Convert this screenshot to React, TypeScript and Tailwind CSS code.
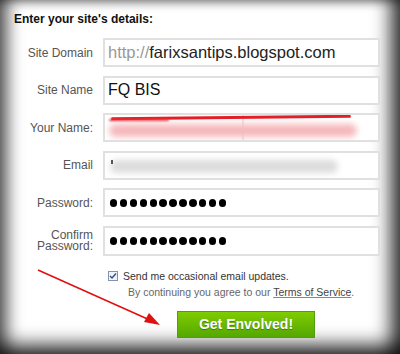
import React from "react";

const Dots = () => (
  <div className="flex items-center gap-[2.5px] pl-[5px]">
    {Array.from({ length: 12 }).map((_, i) => (
      <span key={i} className="block h-[7.4px] w-[7.4px] rounded-full bg-black" />
    ))}
  </div>
);

export default function App() {
  const label = "text-right text-[12px] leading-[12px] text-[#555]";
  const box = "relative h-[29px] border-2 border-[#e0e0e0] bg-white flex items-center overflow-hidden";
  return (
    <div
      className="relative h-[354px] w-[400px] overflow-hidden bg-white shadow-[inset_16px_0_16px_-8px_rgba(0,0,0,0.6),inset_-18px_0_18px_-8px_rgba(0,0,0,0.75),inset_0_-18px_18px_-8px_rgba(0,0,0,0.75),inset_0_10px_10px_-8px_rgba(0,0,0,0.35)]"
      style={{ fontFamily: '"Liberation Sans", Arial, sans-serif' }}
    >
      <div className="pl-[14px] pt-[13px] text-[12px] font-bold leading-[12px] text-[#111]">
        Enter your site's details:
      </div>

      <div className="mt-[13px] grid grid-cols-[93px_277px] items-center gap-x-[10px] gap-y-[8.6px]">
        <div className={label}>Site Domain</div>
        <div className={box}>
          <span className="pl-[3px] text-[16.5px] text-[#222]">
            <span className="text-[#999]">http://</span>farixsantips.blogspot.com
          </span>
        </div>

        <div className={label}>Site Name</div>
        <div className={box}>
          <span className="pl-[3px] text-[16px] text-[#111]">FQ BIS</span>
        </div>

        <div className={label}>Your Name:</div>
        <div className={box}>
          <div className="absolute left-[137px] top-0 h-full w-[2px] bg-[#e8e8e8]" />
          <div className="absolute left-[4px] top-[9px] h-[13px] w-[248px] rounded-full bg-[#f6b8bc] blur-[3px]" />
          <div className="absolute left-[6px] top-[1px] h-[3px] w-[240px] -rotate-[0.6deg] rounded-full bg-[#e41e26] blur-[0.6px]" />
          <div className="absolute left-[4px] top-[4px] h-[2px] w-[60px] rounded-full bg-[#e8323a] blur-[1px]" />
        </div>

        <div className={label}>Email</div>
        <div className={box}>
          <div className="absolute left-[5px] top-[7px] h-[13px] w-[228px] rounded-full bg-[#dcdcdc] blur-[3px]" />
          <div className="absolute left-[6px] top-[7px] h-[4px] w-[2px] bg-[#555]" />
        </div>

        <div className={label}>Password:</div>
        <div className={box}>
          <Dots />
        </div>

        <div className="text-right text-[12px] leading-[11px] text-[#555]">
          Confirm
          <br />
          Password:
        </div>
        <div className={`${box} h-[30px] border-[#67aee4]`}>
          <Dots />
        </div>
      </div>

      <div className="ml-[108px] mt-[14px] flex items-center gap-[5px]">
        <span className="flex h-[10px] w-[10px] items-center justify-center border border-[#8494a8] bg-[#f0f4fa]">
          <svg width="8" height="8" viewBox="0 0 8 8">
            <path d="M1 4 L3 6 L7 1.5" stroke="#2d4f86" strokeWidth="1.4" fill="none" />
          </svg>
        </span>
        <span className="text-[10.5px] leading-[12px] text-[#333]">Send me occasional email updates.</span>
      </div>
      <div className="ml-[128px] mt-[4px] text-[10.5px] leading-[12px] text-[#666]">
        By continuing you agree to our{" "}
        <span className="text-[#444] underline decoration-[#888]">Terms of Service</span>.
      </div>

      <div className="mt-[13px] flex justify-start pl-[177px]">
        <div className="flex h-[27px] w-[138px] items-center justify-center border border-[#4f9e10] bg-gradient-to-b from-[#7fcc00] to-[#54a800] text-[14px] font-bold text-white [text-shadow:0_1px_1px_rgba(0,0,0,0.35)]">
          Get Envolved!
        </div>
      </div>

      <svg className="absolute left-0 top-0" width="400" height="354">
        <line x1="38" y1="270" x2="152" y2="321" stroke="#e01010" strokeWidth="1.6" />
        <polygon points="160,325 144,322 149,313" fill="#e01010" />
      </svg>
    </div>
  );
}
